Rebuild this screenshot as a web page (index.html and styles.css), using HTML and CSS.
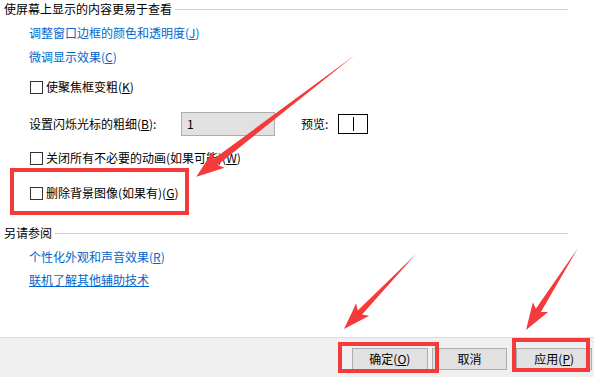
FILE: index.html
```html
<!DOCTYPE html>
<html lang="zh-CN">
<head>
<meta charset="utf-8">
<link rel="stylesheet" href="styles.css">
</head>
<body>
<div class="page">
  <div class="main">
    <div class="head r-head1"><span>使屏幕上显示的内容更易于查看</span><span class="rule"></span></div>
    <div class="row link r-link1">调整窗口边框的颜色和透明度(<u>J</u>)</div>
    <div class="row link r-link2">微调显示效果(<u>C</u>)</div>
    <div class="row r-cb1"><span class="cb"></span>使聚焦框变粗(<u>K</u>)</div>
    <div class="row blink r-blink">
      <span class="blink-label">设置闪烁光标的粗细(<u>B</u>):</span>
      <span class="spin">1</span>
      <span class="preview-label">预览:</span>
      <span class="preview"><span class="caret"></span></span>
    </div>
    <div class="row r-cb3"><span class="cb"></span>关闭所有不必要的动画(如果可能)(<u>W</u>)</div>
    <div class="row r-cb4"><span class="cb"></span>删除背景图像(如果有)(<u>G</u>)</div>
    <div class="head r-head2"><span>另请参阅</span><span class="rule"></span></div>
    <div class="row link r-link3">个性化外观和声音效果(<u>R</u>)</div>
    <div class="row link under r-link4">联机了解其他辅助技术</div>
  </div>
  <div class="footer">
    <button class="btn">确定(<u>O</u>)</button>
    <button class="btn">取消</button>
    <button class="btn btn-apply">应用(<u>P</u>)</button>
  </div>
  <svg class="marks" width="594" height="377" viewBox="0 0 594 377">
    <g fill="none" stroke="#f43a3a" stroke-width="4">
      <rect x="12" y="170" width="175" height="43"/>
      <rect x="340" y="344" width="97" height="27"/>
      <rect x="514" y="340" width="74" height="30"/>
    </g>
    <g fill="#f43a3a">
      <polygon transform="translate(355,55) rotate(142.5)" points="0,0 176,-3.5 172,-10 200,0 172,10 176,3.5"/>
      <polygon transform="translate(416,254) rotate(133.8)" points="0,0 81,-3 77,-9 104,0 77,9 81,3"/>
      <polygon transform="translate(578,248) rotate(122.4)" points="0,0 74,-3 70,-9 97,0 70,9 74,3"/>
    </g>
  </svg>
</div>
</body>
</html>
```
FILE: styles.css
```css
html, body {
  margin: 0;
  padding: 0;
  background: #fff;
}
body {
  font-family: "Microsoft YaHei", "Noto Sans CJK SC", "Noto Sans", sans-serif;
  font-size: 12px;
  color: #000;
}
.page {
  position: relative;
  width: 594px;
  height: 377px;
  display: flex;
  flex-direction: column;
  overflow: hidden;
}
.main {
  flex: 1;
  padding: 0 26px 0 4px;
  display: flex;
  flex-direction: column;
}
.head {
  height: 18px;
  line-height: 18px;
  display: flex;
  align-items: center;
  gap: 3px;
  white-space: nowrap;
}
.rule {
  flex: 1;
  height: 1px;
  background: #cfcfcf;
}
.row {
  height: 18px;
  line-height: 18px;
  display: flex;
  align-items: center;
  padding-left: 25px;
  white-space: nowrap;
}
.link { color: #0066cc; }
.under { text-decoration: underline; }
u { text-decoration: underline; }
.cb {
  width: 11px;
  height: 11px;
  border: 1px solid #333;
  background: #fff;
  margin-left: 1px;
  margin-right: 3px;
  flex: none;
}
.r-head1 { margin-top: 0; }
.r-link1 { margin-top: 6px; }
.r-link2 { margin-top: 6px; }
.r-cb1 { margin-top: 12px; }
.r-blink { margin-top: 16px; height: 24px; }
.r-cb3 { margin-top: 13px; }
.r-cb4 { margin-top: 17px; }
.r-head2 { margin-top: 22px; }
.r-link3 { margin-top: 6px; }
.r-link4 { margin-top: 5px; }
.blink-label { width: 152px; }
.spin {
  box-sizing: border-box;
  width: 94px;
  height: 24px;
  line-height: 22px;
  border: 1px solid #adadad;
  background: #e1e1e1;
  padding-left: 5px;
  color: #000;
}
.preview-label { margin-left: 26px; width: 37px; }
.preview {
  box-sizing: border-box;
  width: 30px;
  height: 20px;
  border: 1px solid #000;
  display: flex;
  justify-content: center;
  align-items: center;
}
.caret {
  width: 1px;
  height: 14px;
  background: #000;
}
.footer {
  height: 39px;
  border-top: 1px solid #dcdcdc;
  background: #f0f0f0;
  display: flex;
  align-items: flex-start;
  padding: 10px 2px 0 352px;
  box-sizing: border-box;
  height: 40px;
  gap: 4px;
}
.btn {
  width: 76px;
  height: 22px;
  border: 1px solid #adadad;
  background: #e1e1e1;
  font-family: "Microsoft YaHei", "Noto Sans CJK SC", sans-serif;
  font-size: 12px;
  color: #000;
  padding: 0;
  line-height: 20px;
}
.btn-apply { margin-left: 5px; }
.marks {
  position: absolute;
  left: 0;
  top: 0;
  pointer-events: none;
}
```
